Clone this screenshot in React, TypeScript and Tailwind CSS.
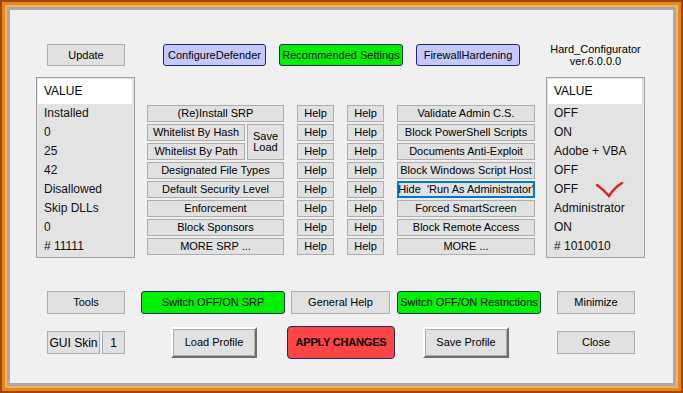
import React from "react";

const font = "font-['Liberation_Sans',Arial,sans-serif]";
const grayBtn =
  "flex items-center justify-center bg-[#e1e1e1] border border-[#adadad] text-[11px] leading-none text-black whitespace-nowrap";
const blueBtn =
  "flex items-center justify-center bg-[#c4c8ff] border border-[#1c2a6a] rounded-[3px] text-[11px] leading-none text-black whitespace-nowrap";
const greenBtn =
  "flex items-center justify-center bg-[#00f000] border border-[#1c2a6a] rounded-[3px] text-[11px] leading-none text-black whitespace-nowrap";

function ValueList({ items, check }: { items: string[]; check?: boolean }) {
  return (
    <div className="relative w-[99px] h-[181px] border border-[#a0a0a0] bg-[#e3e3e3] pt-px pl-px">
      <div className="h-[25px] mr-[2px] bg-white flex items-center pl-[6px] pb-px text-[12px]">
        VALUE
      </div>
      {items.map((v, i) => (
        <div key={i} className="h-[19px] flex items-center pl-[6px] pb-px text-[12px] text-[#111]">
          {v}
        </div>
      ))}
      {check && (
        <svg
          className="absolute left-[49px] top-[104px]"
          width="28"
          height="16"
          viewBox="0 0 28 16"
        >
          <path
            d="M1 3 Q8 8 13 14 Q18 6 26 1"
            fill="none"
            stroke="#e81c1c"
            strokeWidth="2.4"
            strokeLinecap="round"
          />
        </svg>
      )}
    </div>
  );
}

function RaisedBtn({ label }: { label: string }) {
  return (
    <div className="w-[86px] h-[31px] border-2 border-t-white border-l-white border-b-[#6e6e6e] border-r-[#6e6e6e]">
      <div className={grayBtn + " w-full h-full"}>{label}</div>
    </div>
  );
}

export default function App() {
  const col1Rest = [
    "Designated File Types",
    "Default Security Level",
    "Enforcement",
    "Block Sponsors",
    "MORE SRP ...",
  ];
  const col4 = [
    "Validate Admin C.S.",
    "Block PowerShell Scripts",
    "Documents Anti-Exploit",
    "Block Windows Script Host",
    "Hide  'Run As Administrator'",
    "Forced SmartScreen",
    "Block Remote Access",
    "MORE ...",
  ];
  const helps = Array.from({ length: 8 });

  return (
    <div className={font + " w-[683px] h-[393px] bg-[#9a4a08] p-[2px]"}>
      <div className="w-full h-full border-[3px] border-[#ec8616]">
        <div className="w-full h-full border-2 border-[#f6b262]">
          <div className="w-full h-full border-[3px] border-[#a9a9a9] bg-[#f0f0f0] text-black">
            {/* top row */}
            <div className="flex items-start mt-[34px]">
              <div className={grayBtn + " ml-[37px] w-[78px] h-[22px]"}>Update</div>
              <div className={blueBtn + " ml-[38px] w-[103px] h-[22px]"}>ConfigureDefender</div>
              <div className={greenBtn + " ml-[13px] w-[124px] h-[22px]"}>Recommended Settings</div>
              <div className={blueBtn + " ml-[13px] w-[104px] h-[22px]"}>FirewallHardening</div>
              <div className="ml-[26px] w-[99px] -mt-[1px] flex flex-col items-center text-[11px] leading-[12px]">
                <span>Hard_Configurator</span>
                <span>ver.6.0.0.0</span>
              </div>
            </div>

            {/* main area */}
            <div className="flex items-start mt-[10px]">
              <div className="ml-[26px]">
                <ValueList
                  items={["Installed", "0", "25", "42", "Disallowed", "Skip DLLs", "0", "# 11111"]}
                />
              </div>

              <div className="ml-[12px] mt-[28px] flex gap-[13px]">
                <div className="flex flex-col gap-[2px] w-[137px]">
                  <div className={grayBtn + " h-[17px]"}>(Re)Install SRP</div>
                  <div className="flex gap-[2px] h-[36px]">
                    <div className="flex flex-col gap-[2px] w-[98px]">
                      <div className={grayBtn + " h-[17px]"}>Whitelist By Hash</div>
                      <div className={grayBtn + " h-[17px]"}>Whitelist By Path</div>
                    </div>
                    <div className={grayBtn + " w-[37px] h-[36px] flex-col leading-[13px]"}>
                      <span>Save</span>
                      <span>Load</span>
                    </div>
                  </div>
                  {col1Rest.map((t) => (
                    <div key={t} className={grayBtn + " h-[17px]"}>
                      {t}
                    </div>
                  ))}
                </div>
                <div className="flex flex-col gap-[2px] w-[37px]">
                  {helps.map((_, i) => (
                    <div key={i} className={grayBtn + " h-[17px]"}>
                      Help
                    </div>
                  ))}
                </div>
                <div className="flex flex-col gap-[2px] w-[37px]">
                  {helps.map((_, i) => (
                    <div key={i} className={grayBtn + " h-[17px]"}>
                      Help
                    </div>
                  ))}
                </div>
                <div className="flex flex-col gap-[2px] w-[138px]">
                  {col4.map((t, i) =>
                    i === 4 ? (
                      <div
                        key={t}
                        className="flex items-center justify-center bg-[#e1e1e1] border-2 border-[#0078d7] text-[11px] leading-none h-[17px] whitespace-pre"
                      >
                        {t}
                      </div>
                    ) : (
                      <div key={t} className={grayBtn + " h-[17px]"}>
                        {t}
                      </div>
                    )
                  )}
                </div>
              </div>

              <div className="ml-[11px]">
                <ValueList
                  check
                  items={["OFF", "ON", "Adobe + VBA", "OFF", "OFF", "Administrator", "ON", "# 1010010"]}
                />
              </div>
            </div>

            {/* bottom row 1 */}
            <div className="flex items-start mt-[33px]">
              <div className={grayBtn + " ml-[37px] w-[78px] h-[23px]"}>Tools</div>
              <div className={greenBtn + " ml-[16px] w-[144px] h-[23px]"}>Switch OFF/ON SRP</div>
              <div className={grayBtn + " ml-[6px] w-[99px] h-[23px]"}>General Help</div>
              <div className={greenBtn + " ml-[7px] w-[144px] h-[23px]"}>Switch OFF/ON Restrictions</div>
              <div className={grayBtn + " ml-[16px] w-[78px] h-[23px]"}>Minimize</div>
            </div>

            {/* bottom row 2 */}
            <div className="flex items-center mt-[12px] h-[33px]">
              <div className={grayBtn + " ml-[37px] w-[53px] h-[23px] text-[12px]"}>GUI Skin</div>
              <div className={grayBtn + " ml-[2px] w-[23px] h-[23px] text-[12px]"}>1</div>
              <div className="ml-[46px]">
                <RaisedBtn label="Load Profile" />
              </div>
              <div className="ml-[30px] w-[108px] h-[33px] flex items-center justify-center bg-[#ff4444] border border-[#1c2a6a] rounded-[4px] text-[11px] font-bold tracking-[-0.2px]">
                APPLY CHANGES
              </div>
              <div className="ml-[28px]">
                <RaisedBtn label="Save Profile" />
              </div>
              <div className={grayBtn + " ml-[48px] w-[78px] h-[23px]"}>Close</div>
            </div>
          </div>
        </div>
      </div>
    </div>
  );
}
